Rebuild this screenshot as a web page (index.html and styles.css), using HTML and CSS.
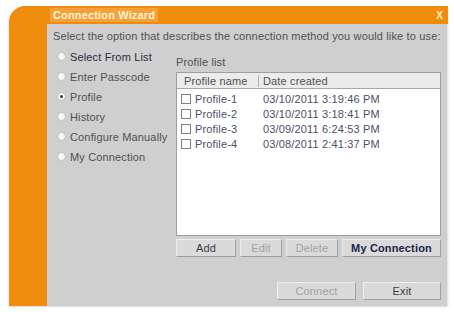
FILE: index.html
```html
<!DOCTYPE html>
<html lang="en">
<head>
  <meta charset="UTF-8" />
  <title>Connection Wizard</title>
  <link rel="stylesheet" href="styles.css">
</head>
<body>
  <div class="window">
    <div class="title-bar">
      <span class="title">Connection Wizard</span>
      <span class="close">X</span>
    </div>
    <div class="frame">
      <div class="panel">
        <div class="intro">Select the option that describes the connection method you would like to use:</div>
        <div class="main">
          <div class="options">
            <label class="option strong"><span class="radio"></span>Select From List</label>
            <label class="option"><span class="radio"></span>Enter Passcode</label>
            <label class="option"><span class="radio checked"></span>Profile</label>
            <label class="option"><span class="radio"></span>History</label>
            <label class="option"><span class="radio"></span>Configure Manually</label>
            <label class="option"><span class="radio"></span>My Connection</label>
          </div>
          <div class="profiles">
            <div class="list-label">Profile list</div>
            <div class="list">
              <div class="list-head">
                <div class="col-name">Profile name</div>
                <div class="col-date">Date created</div>
              </div>
              <div class="row"><div class="col-name"><span class="check"></span>Profile-1</div><div class="col-date">03/10/2011 3:19:46 PM</div></div>
              <div class="row"><div class="col-name"><span class="check"></span>Profile-2</div><div class="col-date">03/10/2011 3:18:41 PM</div></div>
              <div class="row"><div class="col-name"><span class="check"></span>Profile-3</div><div class="col-date">03/09/2011 6:24:53 PM</div></div>
              <div class="row"><div class="col-name"><span class="check"></span>Profile-4</div><div class="col-date">03/08/2011 2:41:37 PM</div></div>
            </div>
            <div class="list-buttons">
              <button class="btn btn-add">Add</button>
              <button class="btn btn-edit disabled">Edit</button>
              <button class="btn btn-delete disabled">Delete</button>
              <button class="btn btn-my strong">My Connection</button>
            </div>
          </div>
        </div>
        <div class="footer">
          <button class="btn btn-connect disabled">Connect</button>
          <button class="btn btn-exit">Exit</button>
        </div>
      </div>
    </div>
  </div>
</body>
</html>
```

FILE: styles.css
```css
* {
  box-sizing: border-box;
  margin: 0;
  padding: 0;
}

html, body {
  height: 100%;
  background: #fff;
  font-family: 'Liberation Sans', Arial, sans-serif;
  font-size: 11px;
  letter-spacing: 0.15px;
  color: #505050;
}

body {
  padding: 6px 6px 0 9px;
}

.window {
  width: 439px;
  height: 300px;
  background: #f08d0c;
  border-top-left-radius: 16px;
  display: flex;
  flex-direction: column;
  box-shadow: 0 1px 2px rgba(0, 0, 0, 0.15);
}

/* barre de titre */
.title-bar {
  height: 18px;
  display: flex;
  align-items: center;
  justify-content: space-between;
  padding: 0 5px 0 41px;
}

.title {
  background: #f3a13a;
  color: #fff4d6;
  font-weight: 700;
  padding: 1px 3px;
}

.close {
  color: #fff2c6;
  font-weight: 700;
  font-size: 10px;
}

.frame {
  flex: 1;
  display: flex;
  padding-left: 38px;
}

.panel {
  flex: 1;
  background: #cfcfcf;
  border-right: 1px solid #e6e6e6;
  display: flex;
  flex-direction: column;
  padding: 6px 6px 0 6px;
}

.intro {
  line-height: 13px;
  white-space: nowrap;
}

.main {
  display: flex;
  margin-top: 7px;
}

.options {
  width: 123px;
  display: flex;
  flex-direction: column;
  gap: 7px;
  padding-left: 4px;
}

.option {
  display: flex;
  align-items: center;
  height: 13px;
  gap: 4px;
}

.strong {
  color: #2b2b40;
}

.radio {
  width: 9px;
  height: 9px;
  border-radius: 50%;
  background: #f7f7f7;
  border: 1px solid #bdbdbd;
  display: flex;
  align-items: center;
  justify-content: center;
}

.radio.checked::after {
  content: '';
  width: 3px;
  height: 3px;
  border-radius: 50%;
  background: #333;
}

.profiles {
  width: 265px;
  display: flex;
  flex-direction: column;
  padding-top: 6px;
}

.list-label {
  line-height: 13px;
}

.list {
  height: 164px;
  margin-top: 3px;
  background: #fff;
  border: 1px solid #9e9e9e;
}

.list-head {
  display: flex;
  height: 16px;
  align-items: center;
  background: #ececec;
  border-bottom: 1px solid #a8a8a8;
}

.list-head .col-name {
  border-right: 1px solid #b0b0b0;
}

.col-name {
  width: 82px;
  padding-left: 7px;
  display: flex;
  align-items: center;
  gap: 4px;
}

.col-date {
  padding-left: 4px;
}

.row {
  display: flex;
  height: 15px;
  align-items: center;
  color: #4c4f6a;
}

.list-head + .row {
  margin-top: 2px;
}

.row .col-name {
  padding-left: 4px;
}

.check {
  width: 10px;
  height: 10px;
  background: #fff;
  border: 1px solid #7e7e7e;
}

.list-buttons {
  display: flex;
  gap: 4px;
  margin-top: 3px;
}

.btn {
  font-family: inherit;
  font-size: 11px;
  letter-spacing: 0.15px;
  height: 18px;
  background: #dadada;
  color: #3b3b45;
  border: 1px solid #a0a0a0;
  border-top-color: #eeeeee;
  border-left-color: #eeeeee;
}

.btn.disabled {
  color: #a2a2a2;
}

.btn.strong {
  color: #24244a;
  font-weight: 700;
}

.btn-add { width: 60px; }
.btn-edit { width: 42px; }
.btn-delete { width: 52px; }
.btn-my { width: 99px; }

.footer {
  display: flex;
  justify-content: flex-end;
  gap: 7px;
  margin-top: 25px;
}

.btn-connect { width: 79px; }
.btn-exit { width: 78px; }
```
